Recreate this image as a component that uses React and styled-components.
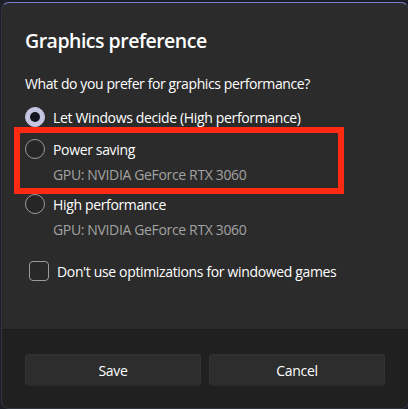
import styled, { createGlobalStyle } from "styled-components";

const Global = createGlobalStyle`
    html, body {
        margin: 0;
        padding: 0;
        background: #1e1e28;
    }
    body {
        font-family: "Open Sans", "Noto Sans", sans-serif;
        color: #ffffff;
    }
`

const Dialog = styled.div`
    width: 406px;
    height: 405px;
    margin: 2px 1px 0 1px;
    background: #2b2b2b;
    border: 1px solid #34343f;
    border-top-color: #7c7cc8;
    border-radius: 8px;
    overflow: hidden;
    display: flex;
    flex-direction: column;
`

const Body = styled.div`
    flex: 1;
    padding: 24px 23px 0 23px;
    display: flex;
    flex-direction: column;
`

const Title = styled.h1`
    margin: 0;
    font-size: 19.5px;
    line-height: 28px;
    font-weight: 600;
    letter-spacing: -0.5px;
`

const Question = styled.p`
    margin: 19px 0 7px 0;
    font-size: 14px;
    line-height: 20px;
    letter-spacing: -0.4px;
`

const Option = styled.div`
    position: relative;
    margin-top: ${p => p.gap || 0}px;

    &::after {
        content: "";
        display: ${p => (p.marked ? "block" : "none")};
        position: absolute;
        top: -6px;
        left: -11px;
        width: 318px;
        height: 55px;
        border: 6px solid #ff2a12;
        pointer-events: none;
    }
`

const Row = styled.div`
    height: 32px;
    display: flex;
    align-items: center;
    gap: 8px;
    font-size: 14px;
    letter-spacing: -0.35px;
`

const Radio = styled.span`
    width: 20px;
    height: 20px;
    border-radius: 50%;
    box-sizing: border-box;
    display: flex;
    align-items: center;
    justify-content: center;
    background: ${p => (p.checked ? "#c6c6e2" : "#262626")};
    border: 1px solid ${p => (p.checked ? "#c6c6e2" : "#9b9b9b")};

    &::before {
        content: "";
        display: ${p => (p.checked ? "block" : "none")};
        width: 10px;
        height: 10px;
        border-radius: 50%;
        background: #151521;
    }
`

const Sub = styled.div`
    margin-left: 28px;
    font-size: 14px;
    line-height: 20px;
    color: #a2a2a2;
    letter-spacing: -0.35px;
`

const CheckRow = styled.label`
    margin-top: 15px;
    height: 32px;
    padding-left: 4px;
    display: flex;
    align-items: center;
    gap: 8px;
    font-size: 14px;
    letter-spacing: -0.35px;
`

const Box = styled.span`
    width: 20px;
    height: 20px;
    box-sizing: border-box;
    border-radius: 4px;
    border: 1px solid #9b9b9b;
    background: #282828;
`

const Footer = styled.div`
    height: 79px;
    box-sizing: border-box;
    background: #202020;
    border-top: 1px solid #1c1c1c;
    padding: 24px 23px 0 23px;
    display: grid;
    grid-template-columns: 1fr 1fr;
    gap: 8px;
    align-items: start;
`

const Button = styled.button`
    height: 32px;
    border-radius: 4px;
    background: #2d2d2d;
    border: 1px solid #333333;
    border-bottom-color: #2a2a2a;
    color: #ffffff;
    font-family: inherit;
    font-size: 14px;
    letter-spacing: -0.3px;
`

const options = [
    { label: "Let Windows decide (High performance)", checked: true },
    { label: "Power saving", gpu: "GPU: NVIDIA GeForce RTX 3060", marked: true },
    { label: "High performance", gpu: "GPU: NVIDIA GeForce RTX 3060", gap: 3 },
]

export default function App() {
    return (
        <>
            <Global />
            <Dialog>
                <Body>
                    <Title>Graphics preference</Title>
                    <Question>What do you prefer for graphics performance?</Question>
                    {options.map(o => (
                        <Option key={o.label} marked={o.marked} gap={o.gap}>
                            <Row>
                                <Radio checked={o.checked} />
                                {o.label}
                            </Row>
                            {o.gpu && <Sub>{o.gpu}</Sub>}
                        </Option>
                    ))}
                    <CheckRow>
                        <Box />
                        Don't use optimizations for windowed games
                    </CheckRow>
                </Body>
                <Footer>
                    <Button>Save</Button>
                    <Button>Cancel</Button>
                </Footer>
            </Dialog>
        </>
    )
}
